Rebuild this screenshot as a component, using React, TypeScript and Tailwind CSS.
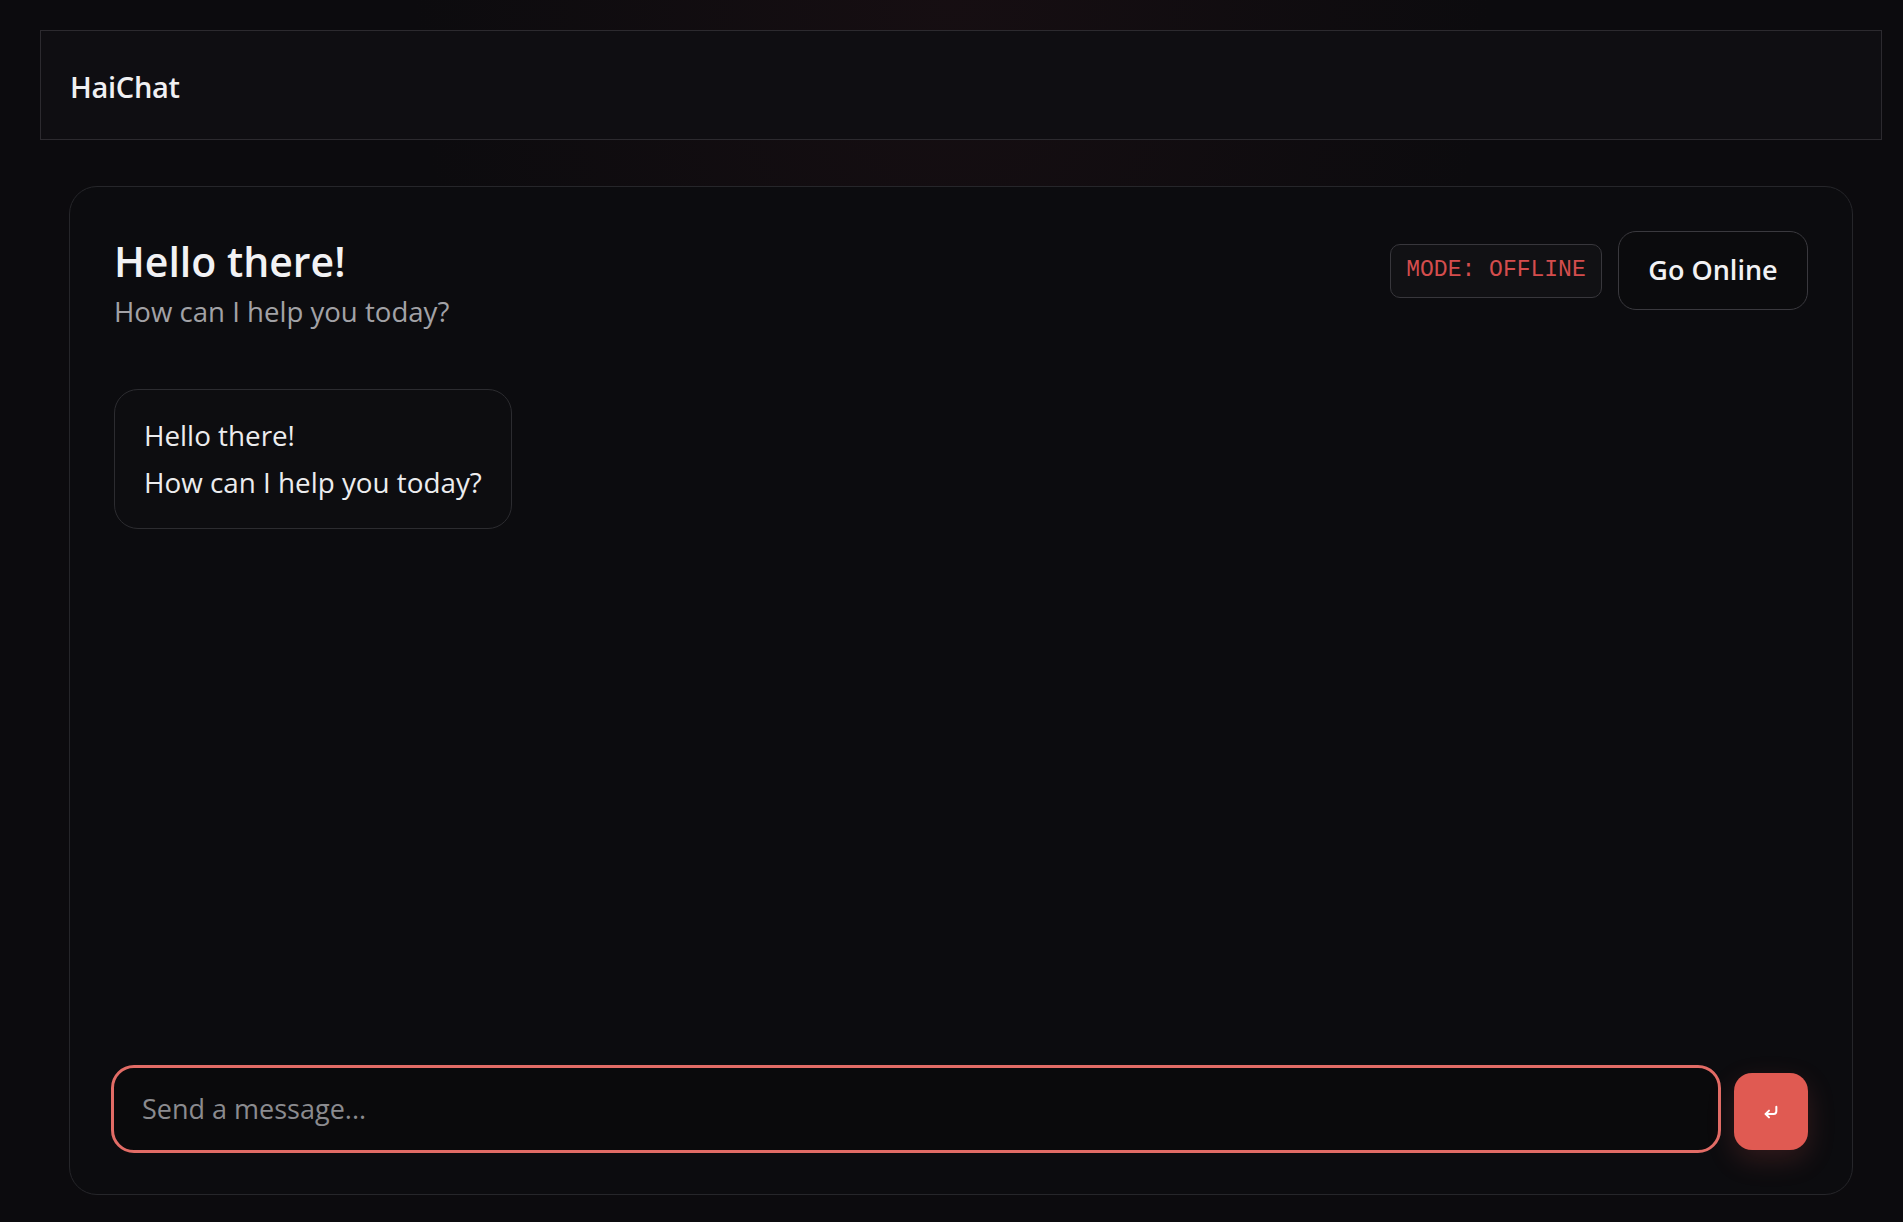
import { useState } from 'react';
import { CornerDownLeft } from 'lucide-react';

type Message = { id: number; text: string };

export default function App() {
  const [online, setOnline] = useState(false);
  const [draft, setDraft] = useState('');
  const [messages] = useState<Message[]>([
    { id: 1, text: 'Hello there!\nHow can I help you today?' },
  ]);

  return (
    <div className="min-h-screen flex flex-col bg-[#0c0b0e] bg-[radial-gradient(ellipse_at_top,rgba(48,22,28,0.28),transparent_40%)] font-['Open_Sans',sans-serif] text-[#ececee]">
      {/* Header */}
      <header className="ml-[40px] mr-[21px] mt-[30px] h-[110px] shrink-0 flex items-center pl-[29px] border border-[#2c2a2f] bg-[#0f0e12]">
        <h1 className="text-[29px] font-semibold tracking-[-0.3px] text-[#f0f0f2] mt-[3px]">HaiChat</h1>
      </header>

      {/* Chat card */}
      <main className="ml-[69px] mr-[50px] mt-[46px] mb-[27px] flex-1 flex flex-col rounded-[28px] border border-[#26262a] bg-[#0c0c0f] p-[44px]">
        <div className="flex items-start justify-between">
          <div className="pt-[4px]">
            <h2 className="text-[41px] font-semibold leading-[52px] text-[#f2f2f4]">Hello there!</h2>
            <p className="mt-[5px] text-[27.6px] leading-[38px] text-[#a2a2a6]">How can I help you today?</p>
          </div>
          <div className="flex items-center gap-4">
            <span className="h-[54px] w-[212px] flex items-center justify-center rounded-[10px] border-[1.5px] border-[#38373c] bg-[#111114] font-['Liberation_Mono',monospace] text-[23px] text-[#d44d4d]">
              MODE: {online ? 'ONLINE' : 'OFFLINE'}
            </span>
            <button
              onClick={() => setOnline(!online)}
              className="h-[79px] w-[190px] rounded-[18px] border-[1.5px] border-[#3a393e] bg-[#0b0b0d] text-[27px] font-semibold text-[#f2f2f4]"
            >
              {online ? 'Go Offline' : 'Go Online'}
            </button>
          </div>
        </div>

        {/* Messages */}
        <div className="flex-1 mt-[59px] flex flex-col items-start gap-4">
          {messages.map((m) => (
            <div
              key={m.id}
              className="whitespace-pre-line rounded-[24px] border-[1.5px] border-[#2c2c30] bg-[#0d0d10] px-[29px] py-[22px] text-[27.8px] leading-[47px] text-[#ececee]"
            >
              {m.text}
            </div>
          ))}
        </div>

        {/* Input */}
        <div className="flex items-end gap-4">
          <div className="flex-1 h-[82px] flex items-center rounded-[20px] bg-[#0a0a0c] outline-[3.5px] outline-[#e26c66]">
            <input
              autoFocus
              value={draft}
              onChange={(e) => setDraft(e.target.value)}
              placeholder="Send a message..."
              className="w-full bg-transparent pl-[28px] pr-6 text-[27px] text-[#ececee] placeholder:text-[#8b8b8f] outline-none caret-[#e0e0e0]"
            />
          </div>
          <button className="h-[77px] w-[74px] flex items-center justify-center rounded-[18px] bg-[#e05a52] text-white shadow-[0_10px_28px_rgba(224,90,82,0.18)]">
            <CornerDownLeft size={16} strokeWidth={3} />
          </button>
        </div>
      </main>
    </div>
  );
}
